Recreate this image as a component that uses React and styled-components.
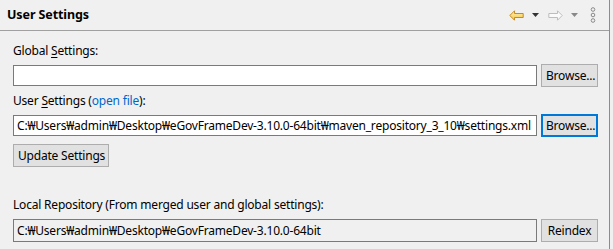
import React from 'react'
import styled, { createGlobalStyle } from 'styled-components'

const Global = createGlobalStyle`
  html, body {
    margin: 0;
    padding: 0;
    background: #f0f0f0;
  }
  body {
    font-family: "Noto Sans", "Noto Sans CJK KR", sans-serif;
    font-size: 12px;
    letter-spacing: -0.2px;
    color: #000;
  }
`

const Panel = styled.div`
  width: 610px;
  height: 249px;
  border-right: 1px solid #8c8c8c;
  box-sizing: border-box;
`

const Header = styled.div`
  height: 30px;
  display: flex;
  align-items: center;
  padding: 0 7px;
  border-bottom: 1px solid #a0a0a0;
`

const Title = styled.div`
  flex: 1;
  font-weight: bold;
  font-size: 12.5px;
  letter-spacing: -0.1px;
  padding-bottom: 1px;
`

const Tools = styled.div`
  display: flex;
  align-items: center;
  margin-right: 6px;
`

const ToolIcon = styled.span`
  display: inline-flex;
  align-items: center;
  margin-left: ${p => p.$gap || 0}px;
`

const Body = styled.div`
  padding: 12px 11px 0 13px;
`

const Label = styled.div`
  height: 16px;
  line-height: 16px;
  margin-top: ${p => p.$top || 0}px;
  u { text-decoration-thickness: 1px; text-underline-offset: 2px; }
`

const Link = styled.span`
  color: #0066cc;
`

const Row = styled.div`
  display: grid;
  grid-template-columns: 1fr 57px;
  gap: 4px;
  align-items: center;
  margin-top: ${p => p.$top || 0}px;
`

const Field = styled.div`
  height: ${p => p.$h || 21}px;
  box-sizing: border-box;
  border: 1px solid #7a7a7a;
  background: ${p => (p.$readOnly ? '#f0f0f0' : '#fff')};
  padding: 0 3px;
  line-height: ${p => (p.$h || 21) - 2}px;
  white-space: nowrap;
  overflow: hidden;
`

const Button = styled.button`
  height: 23px;
  box-sizing: border-box;
  border: ${p => (p.$focus ? '2px solid #0078d7' : '1px solid #adadad')};
  background: #e1e1e1;
  font: inherit;
  letter-spacing: inherit;
  color: #000;
  padding: 0 ${p => (p.$focus ? 3 : 4)}px;
  margin: 0;
  white-space: nowrap;
  width: ${p => (p.$w ? p.$w + 'px' : 'auto')};
`

const Actions = styled.div`
  display: flex;
  margin-top: ${p => p.$top || 0}px;
`

const BackIcon = () => (
  <svg width="15" height="11" viewBox="0 0 15 11">
    <defs>
      <linearGradient id="bk" x1="0" y1="0" x2="0" y2="1">
        <stop offset="0" stopColor="#fff2b8" />
        <stop offset="1" stopColor="#f5c542" />
      </linearGradient>
    </defs>
    <path d="M0.8 5.5 L5.5 0.8 L5.5 3.5 L14.2 3.5 L14.2 7.5 L5.5 7.5 L5.5 10.2 Z" fill="url(#bk)" stroke="#c78a1c" strokeWidth="1" strokeLinejoin="round" />
  </svg>
)

const ForwardIcon = () => (
  <svg width="15" height="11" viewBox="0 0 15 11">
    <path d="M14.2 5.5 L9.5 0.8 L9.5 3.5 L0.8 3.5 L0.8 7.5 L9.5 7.5 L9.5 10.2 Z" fill="#fafafa" stroke="#bdbdbd" strokeWidth="1" strokeLinejoin="round" />
  </svg>
)

const Caret = ({ color }) => (
  <svg width="7" height="4" viewBox="0 0 7 4">
    <path d="M0 0 L7 0 L3.5 4 Z" fill={color} />
  </svg>
)

const ChainIcon = () => (
  <svg width="6" height="16" viewBox="0 0 6 16">
    <circle cx="3" cy="2.5" r="1.8" fill="none" stroke="#8a8a8a" strokeWidth="1" />
    <circle cx="3" cy="8" r="1.8" fill="none" stroke="#8a8a8a" strokeWidth="1" />
    <circle cx="3" cy="13.5" r="1.8" fill="none" stroke="#8a8a8a" strokeWidth="1" />
  </svg>
)

export default function App() {
  return (
    <>
      <Global />
      <Panel>
        <Header>
          <Title>User Settings</Title>
          <Tools>
            <ToolIcon><BackIcon /></ToolIcon>
            <ToolIcon $gap={8}><Caret color="#333" /></ToolIcon>
            <ToolIcon $gap={9}><ForwardIcon /></ToolIcon>
            <ToolIcon $gap={8}><Caret color="#888" /></ToolIcon>
            <ToolIcon $gap={12}><ChainIcon /></ToolIcon>
          </Tools>
        </Header>
        <Body>
          <Label>Global <u>S</u>ettings:</Label>
          <Row $top={5}>
            <Field />
            <Button>Browse...</Button>
          </Row>
          <Label $top={6}>User <u>S</u>ettings (<Link>open file</Link>):</Label>
          <Row $top={5}>
            <Field>C:₩Users₩admin₩Desktop₩eGovFrameDev-3.10.0-64bit₩maven_repository_3_10₩settings.xml</Field>
            <Button $focus>Browse...</Button>
          </Row>
          <Actions $top={7}>
            <Button $w={96}>Update Settings</Button>
          </Actions>
          <Label $top={30}>Local Repository (From merged user and global settings):</Label>
          <Row $top={6}>
            <Field $readOnly $h={23}>C:₩Users₩admin₩Desktop₩eGovFrameDev-3.10.0-64bit</Field>
            <Button>Reindex</Button>
          </Row>
        </Body>
      </Panel>
    </>
  )
}
